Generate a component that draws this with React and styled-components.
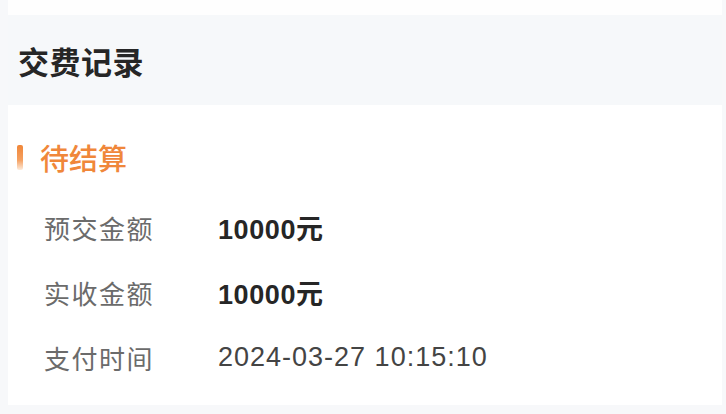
import React from 'react';
import styled, { createGlobalStyle } from 'styled-components';

const GlobalStyle = createGlobalStyle`
  html, body {
    margin: 0;
    padding: 0;
    background: #f7f8fa;
  }
  body {
    font-family: "Liberation Sans", "Noto Sans CJK SC", sans-serif;
  }
`;

const Page = styled.div`
  width: 726px;
  height: 414px;
  box-sizing: border-box;
  padding: 0 4px 9px 8px;
  display: flex;
  flex-direction: column;
  background: #f7f8fa;
  overflow: hidden;
`;

const TopGap = styled.div`
  height: 15px;
  background: #fefefe;
  flex-shrink: 0;
`;

const Header = styled.div`
  height: 90px;
  flex-shrink: 0;
  display: flex;
  align-items: center;
  padding-left: 10px;
  background: #f6f8fa;
  font-size: 31px;
  font-weight: 700;
  color: #262626;
  letter-spacing: 0.5px;
`;

const Card = styled.div`
  flex: 1;
  background: #ffffff;
  padding: 32px 0 0 9px;
`;

const SectionTitle = styled.div`
  display: flex;
  align-items: center;
  gap: 17px;
  height: 40px;
  font-size: 29px;
  font-weight: 500;
  color: #f0873a;
`;

const Bar = styled.span`
  width: 6px;
  height: 25px;
  border-radius: 2px;
  background: linear-gradient(180deg, #f08638 0%, #f5a060 60%, rgba(248, 190, 140, 0.3) 100%);
`;

const Rows = styled.div`
  display: flex;
  flex-direction: column;
  gap: 25px;
  margin-top: 30px;
  padding-left: 27px;
`;

const Row = styled.div`
  display: grid;
  grid-template-columns: 174px 1fr;
  align-items: center;
  height: 40px;
`;

const Label = styled.span`
  font-size: 26px;
  color: #6b6b6b;
  letter-spacing: 1.5px;
`;

const Value = styled.span`
  font-size: 27px;
  font-weight: ${p => (p.$bold ? 700 : 400)};
  color: ${p => (p.$bold ? '#262626' : '#444444')};
  letter-spacing: ${p => (p.$bold ? '0.6px' : '1px')};
`;

const rows = [
  { label: '预交金额', value: '10000元', bold: true },
  { label: '实收金额', value: '10000元', bold: true },
  { label: '支付时间', value: '2024-03-27 10:15:10', bold: false },
];

export default function App() {
  return (
    <>
      <GlobalStyle />
      <Page>
        <TopGap />
        <Header>交费记录</Header>
        <Card>
          <SectionTitle>
            <Bar />
            待结算
          </SectionTitle>
          <Rows>
            {rows.map(r => (
              <Row key={r.label}>
                <Label>{r.label}</Label>
                <Value $bold={r.bold}>{r.value}</Value>
              </Row>
            ))}
          </Rows>
        </Card>
      </Page>
    </>
  );
}
